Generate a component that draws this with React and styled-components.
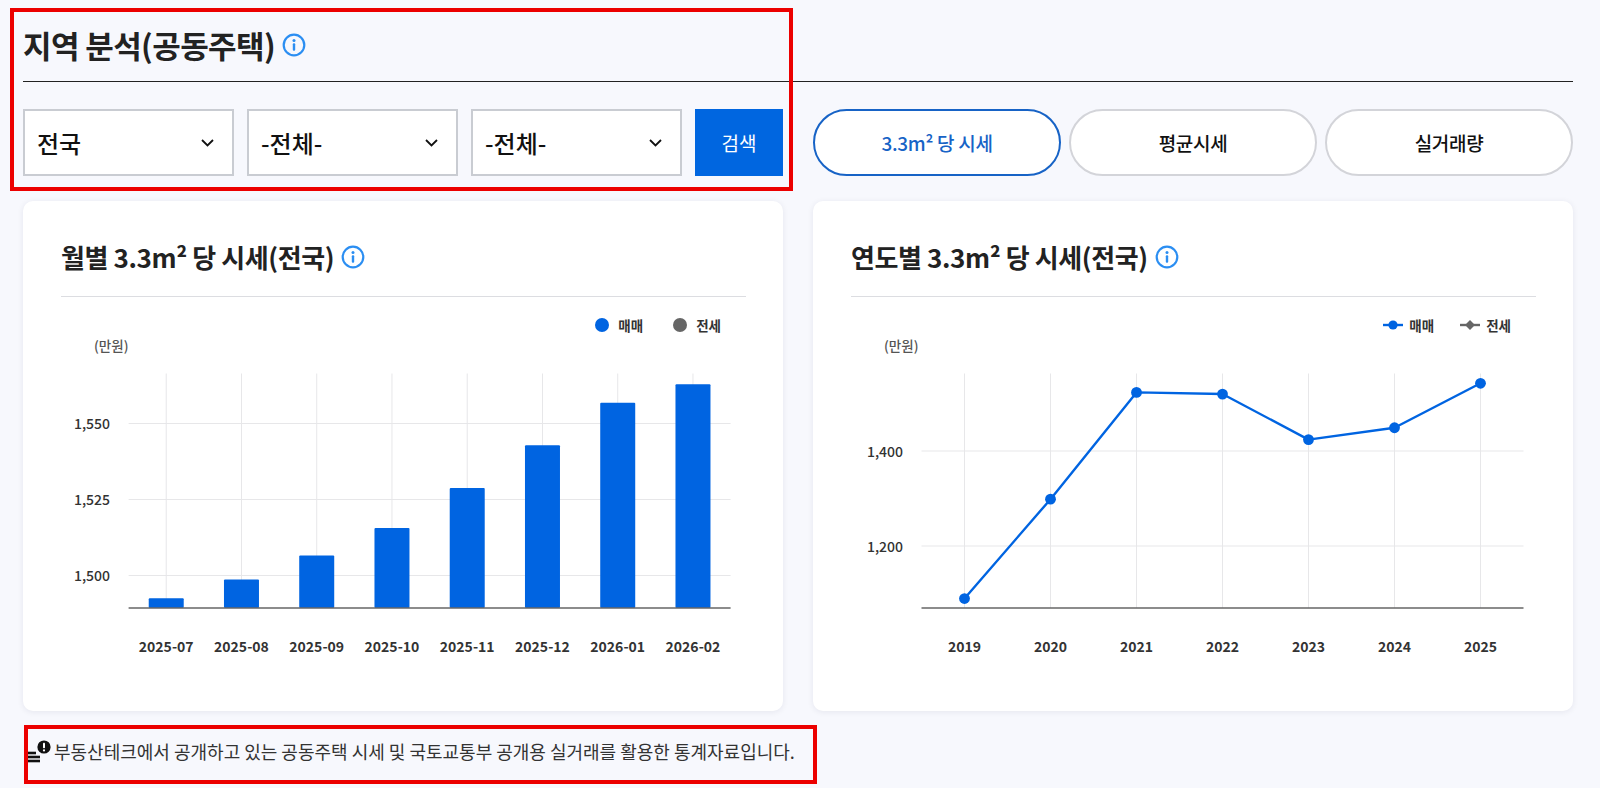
import React from "react";
import styled, { createGlobalStyle } from "styled-components";

const GlobalStyle = createGlobalStyle`
  html, body {
    margin: 0;
    padding: 0;
    background: #f7f8fd;
  }
  body {
    font-family: "Noto Sans CJK KR", "Noto Sans", sans-serif;
    color: #111;
  }
  * {
    box-sizing: border-box;
  }
`;

const Page = styled.div`
  position: relative;
  width: 1600px;
  height: 788px;
  padding: 0 27px 0 23px;
  overflow: hidden;
`;

const Header = styled.div`
  display: flex;
  align-items: center;
  gap: 7px;
  height: 82px;
  padding-top: 9px;
  border-bottom: 1px solid #222;
`;

const Title = styled.h1`
  margin: 0;
  font-size: 31px;
  font-weight: 700;
  line-height: 40px;
  letter-spacing: -0.6px;
  color: #222;
`;

const Controls = styled.div`
  display: flex;
  gap: 30px;
  height: 67px;
  margin-top: 27px;
`;

const FilterGroup = styled.div`
  width: 760px;
  display: flex;
  gap: 13px;
`;

const Select = styled.div`
  width: 211px;
  height: 67px;
  background: #fff;
  border: 2px solid #c9ccd2;
  display: flex;
  align-items: center;
  justify-content: space-between;
  padding: 0 18px 0 12px;
  font-size: 24px;
  font-weight: 500;
  color: #111;
`;

const SearchButton = styled.button`
  width: 88px;
  height: 67px;
  border: 0;
  background: #0066e0;
  color: #fff;
  font-family: inherit;
  font-size: 19px;
  font-weight: 400;
`;

const PillGroup = styled.div`
  flex: 1;
  display: flex;
  gap: 8px;
`;

const Pill = styled.button`
  flex: 1;
  height: 67px;
  border-radius: 34px;
  background: #fff;
  border: 2px solid ${props => (props.$active ? "#1763c6" : "#d3d4d9")};
  color: ${props => (props.$active ? "#1763c6" : "#111")};
  font-family: inherit;
  font-size: 19px;
  font-weight: 500;
  letter-spacing: -0.3px;
`;

const Cards = styled.div`
  display: grid;
  grid-template-columns: 1fr 1fr;
  gap: 30px;
  height: 510px;
  margin-top: 25px;
`;

const Card = styled.div`
  background: #fff;
  border-radius: 10px;
  box-shadow: 0 1px 6px rgba(20, 30, 70, 0.08);
  padding: 38px 37px 0 38px;
`;

const CardHead = styled.div`
  display: flex;
  align-items: center;
  gap: 7px;
  padding-bottom: 21px;
  border-bottom: 1px solid #dcdde1;
`;

const CardTitle = styled.h2`
  margin: 0;
  font-size: 26px;
  font-weight: 700;
  line-height: 36px;
  letter-spacing: -0.4px;
  color: #222;
`;

const Legend = styled.div`
  display: flex;
  justify-content: flex-end;
  align-items: center;
  gap: ${props => props.$gap}px;
  height: 20px;
  margin-top: 18px;
  padding-right: 25px;
`;

const LegendItem = styled.div`
  display: flex;
  align-items: center;
  gap: ${props => props.$gap}px;
  font-size: 13.5px;
  font-weight: 700;
  color: #333;
`;

const Dot = styled.span`
  width: 14px;
  height: 14px;
  border-radius: 50%;
  background: ${props => props.$color};
`;

const Unit = styled.div`
  margin-top: 2px;
  padding-left: 33px;
  font-size: 13.5px;
  font-weight: 500;
  line-height: 16px;
  color: #555;
`;

const ChartSvg = styled.svg`
  display: block;
  font-family: "Noto Sans CJK KR", "Noto Sans", sans-serif;
`;

const Footer = styled.div`
  display: flex;
  align-items: center;
  gap: 2px;
  height: 59px;
  margin-top: 14px;
  padding: 0 0 8px 3px;
  font-size: 18px;
  color: #333;
`;

const RedBox = styled.div`
  position: absolute;
  left: ${props => props.$left}px;
  top: ${props => props.$top}px;
  width: ${props => props.$width}px;
  height: ${props => props.$height}px;
  border: 4px solid #ec0000;
  pointer-events: none;
`;

const InfoIcon = ({ size = 24 }) => (
  <svg width={size} height={size} viewBox="0 0 24 24">
    <circle cx="12" cy="12" r="10.3" fill="none" stroke="#2b8ef2" strokeWidth="2.2" />
    <circle cx="12" cy="7.4" r="1.5" fill="#2b8ef2" />
    <rect x="10.8" y="10.2" width="2.4" height="7.6" rx="1" fill="#2b8ef2" />
  </svg>
);

const Chevron = () => (
  <svg width="13" height="8" viewBox="0 0 13 8">
    <polyline points="1,1 6.5,6.5 12,1" fill="none" stroke="#111" strokeWidth="1.8" />
  </svg>
);

const NoticeIcon = () => (
  <svg width="26" height="24" viewBox="0 0 26 24">
    <line x1="1" y1="14" x2="10" y2="14" stroke="#111" strokeWidth="2.6" />
    <line x1="1" y1="18" x2="14" y2="18" stroke="#111" strokeWidth="2.6" />
    <line x1="1" y1="22" x2="14" y2="22" stroke="#111" strokeWidth="2.6" />
    <circle cx="18" cy="8" r="6.6" fill="#111" />
    <rect x="17" y="3.8" width="2" height="5.4" rx="0.7" fill="#fff" />
    <circle cx="18" cy="11.4" r="1.1" fill="#fff" />
  </svg>
);

const LineMarker = ({ color, diamond }) => (
  <svg width="20" height="10" viewBox="0 0 20 10">
    <line x1="0" y1="5" x2="20" y2="5" stroke={color} strokeWidth="2.4" />
    {diamond ? (
      <rect x="6.5" y="1.5" width="7" height="7" transform="rotate(45 10 5)" fill={color} />
    ) : (
      <circle cx="10" cy="5" r="4.6" fill={color} />
    )}
  </svg>
);

const GRID = "#e7e7e9";
const AXIS = "#666";
const BLUE = "#0064e1";

const monthly = [
  { label: "2025-07", value: 1492.5 },
  { label: "2025-08", value: 1498.7 },
  { label: "2025-09", value: 1506.6 },
  { label: "2025-10", value: 1515.6 },
  { label: "2025-11", value: 1528.8 },
  { label: "2025-12", value: 1542.8 },
  { label: "2026-01", value: 1556.8 },
  { label: "2026-02", value: 1562.9 },
];

const yearly = [
  { label: "2019", value: 1089.4 },
  { label: "2020", value: 1298.6 },
  { label: "2021", value: 1523.4 },
  { label: "2022", value: 1519.9 },
  { label: "2023", value: 1424.1 },
  { label: "2024", value: 1449.0 },
  { label: "2025", value: 1542.6 },
];

const BarChart = ({ data }) => {
  const x0 = 67.6;
  const x1 = 669.6;
  const base = 255;
  const top = 20.5;
  const vmin = 1489.3;
  const k = 3.04;
  const band = (x1 - x0) / data.length;
  const y = v => base - (v - vmin) * k;
  const ticks = [1550, 1525, 1500];

  return (
    <ChartSvg width="684" height="320">
      {ticks.map(t => (
        <line key={t} x1={x0} x2={x1} y1={y(t)} y2={y(t)} stroke={GRID} strokeWidth="1" />
      ))}
      {data.map((d, i) => {
        const cx = x0 + band * (i + 0.5);
        return <line key={d.label} x1={cx} x2={cx} y1={top} y2={base} stroke={GRID} strokeWidth="1" />;
      })}
      {data.map((d, i) => {
        const cx = x0 + band * (i + 0.5);
        return (
          <rect key={d.label} x={cx - 17.5} y={y(d.value)} width="35" height={base - y(d.value)} rx="1" fill={BLUE} />
        );
      })}
      <line x1={x0} x2={x1} y1={base} y2={base} stroke={AXIS} strokeWidth="1.6" />
      {ticks.map(t => (
        <text key={t} x="49" y={y(t)} textAnchor="end" dominantBaseline="central" fontSize="14" fontWeight="500" fill="#333">
          {t.toLocaleString("en-US")}
        </text>
      ))}
      {data.map((d, i) => (
        <text key={d.label} x={x0 + band * (i + 0.5)} y="293" textAnchor="middle" dominantBaseline="central" fontSize="14" fontWeight="600" fill="#333">
          {d.label}
        </text>
      ))}
    </ChartSvg>
  );
};

const LineChart = ({ data }) => {
  const x0 = 70.5;
  const x1 = 672.5;
  const base = 255;
  const top = 20.5;
  const vmin = 1069.5;
  const k = 0.475;
  const band = (x1 - x0) / data.length;
  const y = v => base - (v - vmin) * k;
  const ticks = [1400, 1200];
  const pts = data.map((d, i) => [x0 + band * (i + 0.5), y(d.value)]);

  return (
    <ChartSvg width="684" height="320">
      {ticks.map(t => (
        <line key={t} x1={x0} x2={x1} y1={y(t)} y2={y(t)} stroke={GRID} strokeWidth="1" />
      ))}
      {pts.map(([cx], i) => (
        <line key={i} x1={cx} x2={cx} y1={top} y2={base} stroke={GRID} strokeWidth="1" />
      ))}
      <line x1={x0} x2={x1} y1={base} y2={base} stroke={AXIS} strokeWidth="1.6" />
      <polyline points={pts.map(p => p.join(",")).join(" ")} fill="none" stroke={BLUE} strokeWidth="2.4" strokeLinejoin="round" />
      {pts.map(([cx, cy], i) => (
        <circle key={i} cx={cx} cy={cy} r="5.4" fill={BLUE} />
      ))}
      {ticks.map(t => (
        <text key={t} x="52" y={y(t)} textAnchor="end" dominantBaseline="central" fontSize="14" fontWeight="500" fill="#333">
          {t.toLocaleString("en-US")}
        </text>
      ))}
      {data.map((d, i) => (
        <text key={d.label} x={x0 + band * (i + 0.5)} y="293" textAnchor="middle" dominantBaseline="central" fontSize="14" fontWeight="600" fill="#333">
          {d.label}
        </text>
      ))}
    </ChartSvg>
  );
};

const App = () => {
  const [tab, setTab] = React.useState(0);
  const tabs = ["3.3m² 당 시세", "평균시세", "실거래량"];

  return (
    <>
      <GlobalStyle />
      <Page>
        <Header>
          <Title>지역 분석(공동주택)</Title>
          <InfoIcon />
        </Header>

        <Controls>
          <FilterGroup>
            <Select>
              전국
              <Chevron />
            </Select>
            <Select>
              -전체-
              <Chevron />
            </Select>
            <Select>
              -전체-
              <Chevron />
            </Select>
            <SearchButton>검색</SearchButton>
          </FilterGroup>
          <PillGroup>
            {tabs.map((t, i) => (
              <Pill key={t} $active={tab === i} onClick={() => setTab(i)}>
                {t}
              </Pill>
            ))}
          </PillGroup>
        </Controls>

        <Cards>
          <Card>
            <CardHead>
              <CardTitle>월별 3.3m² 당 시세(전국)</CardTitle>
              <InfoIcon />
            </CardHead>
            <Legend $gap={30}>
              <LegendItem $gap={9}>
                <Dot $color={BLUE} />
                매매
              </LegendItem>
              <LegendItem $gap={9}>
                <Dot $color="#666" />
                전세
              </LegendItem>
            </Legend>
            <Unit>(만원)</Unit>
            <BarChart data={monthly} />
          </Card>

          <Card>
            <CardHead>
              <CardTitle>연도별 3.3m² 당 시세(전국)</CardTitle>
              <InfoIcon />
            </CardHead>
            <Legend $gap={26}>
              <LegendItem $gap={6}>
                <LineMarker color={BLUE} />
                매매
              </LegendItem>
              <LegendItem $gap={6}>
                <LineMarker color="#666" diamond />
                전세
              </LegendItem>
            </Legend>
            <Unit>(만원)</Unit>
            <LineChart data={yearly} />
          </Card>
        </Cards>

        <Footer>
          <NoticeIcon />
          부동산테크에서 공개하고 있는 공동주택 시세 및 국토교통부 공개용 실거래를 활용한 통계자료입니다.
        </Footer>

        <RedBox $left={10} $top={8} $width={783} $height={183} />
        <RedBox $left={24} $top={725} $width={793} $height={59} />
      </Page>
    </>
  );
};

export default App;
